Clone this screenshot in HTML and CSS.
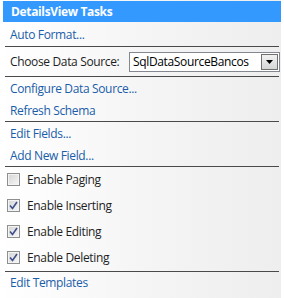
FILE: index.html
```html
<!DOCTYPE html>
<html>
<head>
<meta charset="utf-8">
<link rel="stylesheet" href="styles.css">
</head>
<body>
<div class="panel">
  <div class="header">DetailsView Tasks</div>
  <div class="row r-auto"><a class="link">Auto Format...</a></div>
  <div class="sep"></div>
  <div class="row r-choose">
    <span class="label">Choose Data Source:</span>
    <div class="select">
      <span class="select-text">SqlDataSourceBancos</span>
      <span class="select-btn"><svg width="7" height="4" viewBox="0 0 7 4"><path d="M0 0H7L3.5 4Z" fill="#000"/></svg></span>
    </div>
  </div>
  <div class="sep"></div>
  <div class="row r-link"><a class="link">Configure Data Source...</a></div>
  <div class="row r-link"><a class="link">Refresh Schema</a></div>
  <div class="sep"></div>
  <div class="row r-link"><a class="link">Edit Fields...</a></div>
  <div class="row r-link"><a class="link">Add New Field...</a></div>
  <div class="sep"></div>
  <div class="checks">
    <div class="row r-check"><span class="cb"></span><span class="label">Enable Paging</span></div>
    <div class="row r-check"><span class="cb"><svg width="9" height="9" viewBox="0 0 9 9"><path d="M1 4.5L3.5 7.5L8 1" fill="none" stroke="#3c4f8a" stroke-width="1.6"/></svg></span><span class="label">Enable Inserting</span></div>
    <div class="row r-check"><span class="cb"><svg width="9" height="9" viewBox="0 0 9 9"><path d="M1 4.5L3.5 7.5L8 1" fill="none" stroke="#3c4f8a" stroke-width="1.6"/></svg></span><span class="label">Enable Editing</span></div>
    <div class="row r-check"><span class="cb"><svg width="9" height="9" viewBox="0 0 9 9"><path d="M1 4.5L3.5 7.5L8 1" fill="none" stroke="#3c4f8a" stroke-width="1.6"/></svg></span><span class="label">Enable Deleting</span></div>
  </div>
  <div class="sep"></div>
  <div class="row r-link r-last"><a class="link">Edit Templates</a></div>
</div>
</body>
</html>
```
FILE: styles.css
```css
html, body {
  margin: 0;
  padding: 0;
  background: #ffffff;
}
.panel {
  width: 281px;
  height: 298px;
  box-sizing: border-box;
  padding-top: 1px;
  background: linear-gradient(to right, #ffffff 0%, #f5f5f5 50%, #eeeeee 100%);
  font-family: "Open Sans", "DejaVu Sans", sans-serif;
  font-size: 12px;
  letter-spacing: -0.35px;
  color: #1e1e1e;
}
.header {
  margin-left: 3px;
  height: 21px;
  background: #3399ff;
  color: #ffffff;
  font-weight: bold;
  padding-left: 8px;
  display: flex;
  align-items: center;
}
.row {
  display: flex;
  align-items: center;
  padding-left: 10px;
}
.r-auto { height: 24px; }
.r-choose { height: 29px; }
.r-link { height: 22px; }
.r-check {
  height: 24px;
  padding-bottom: 2px;
  padding-left: 7px;
}
.r-last { height: 21px; }
.sep {
  margin-left: 5px;
  width: 274px;
  height: 1px;
  background: #4a4a4a;
}
.link {
  color: #1a5da9;
  text-decoration: none;
}
.label {
  white-space: nowrap;
}
.select {
  margin-left: auto;
  margin-right: 1px;
  width: 151px;
  height: 20px;
  box-sizing: border-box;
  border: 1px solid #828790;
  background: #ffffff;
  display: flex;
  align-items: center;
  padding-left: 3px;
  padding-right: 1px;
}
.select-text {
  flex: 1;
  color: #000;
}
.select-btn {
  width: 17px;
  height: 16px;
  box-sizing: border-box;
  border: 1px solid #707070;
  background: linear-gradient(to bottom, #f2f2f2, #d6d6d6);
  display: flex;
  align-items: center;
  justify-content: center;
}
.cb {
  width: 13px;
  height: 13px;
  box-sizing: border-box;
  border: 1px solid #8e8f8f;
  background: linear-gradient(135deg, #d4d4d4, #f7f7f7);
  box-shadow: inset 0 0 0 1px #f4f4f4;
  display: flex;
  align-items: center;
  justify-content: center;
  margin-right: 7px;
}
```
